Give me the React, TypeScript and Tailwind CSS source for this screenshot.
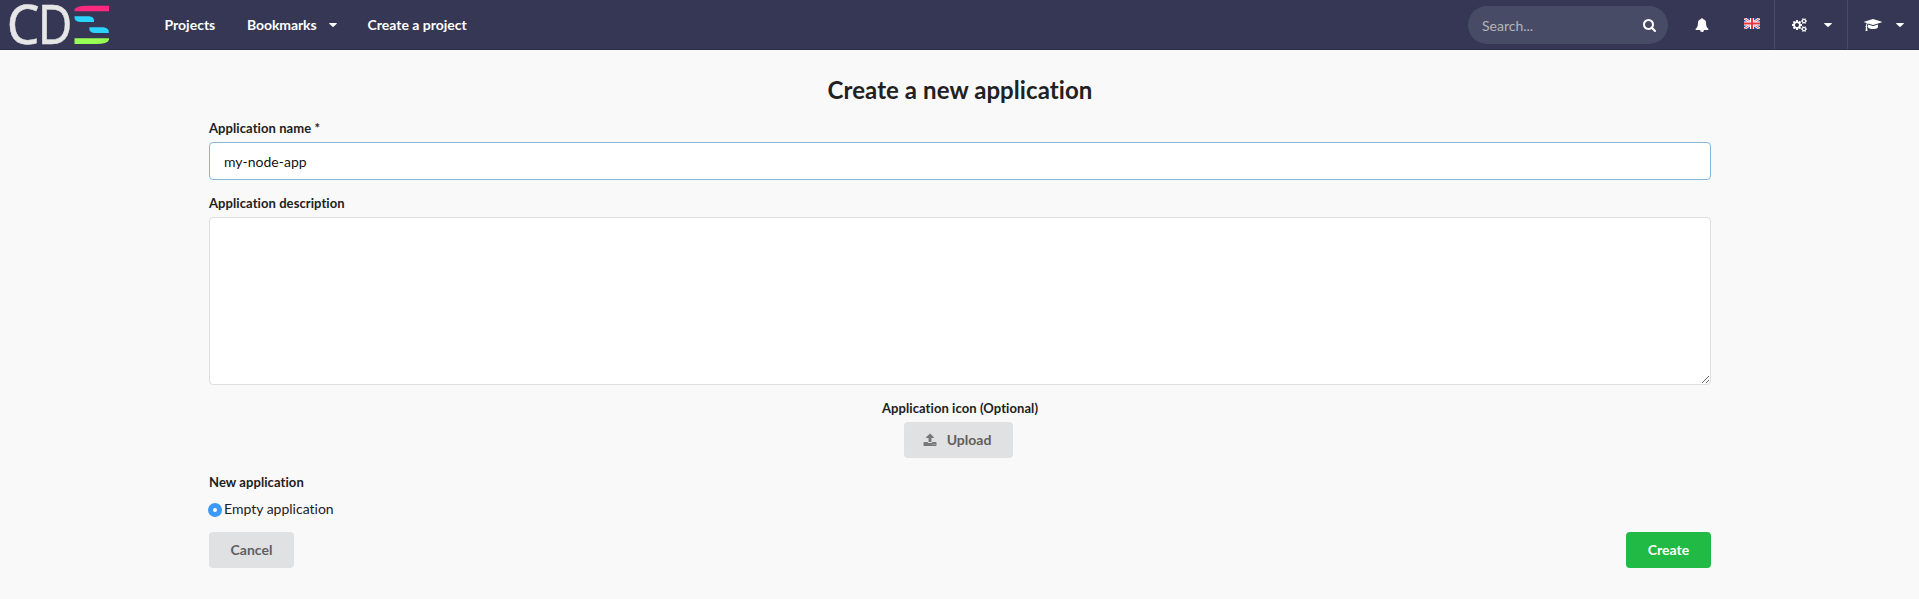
import React, { useState } from "react";

const BELL =
  "M912 1696q0-16-16-16-59 0-101.5-42.5t-42.5-101.5q0-16-16-16t-16 16q0 73 51.5 124.5t124.5 51.5q16 0 16-16zm816-288q0 52-38 90t-90 38h-448q0 106-75 181t-181 75-181-75-75-181h-448q-52 0-90-38t-38-90q50-42 91-88t85-119.5 74.5-158.5 50-206 19.5-260q0-152 117-282.5t307-158.5q-8-19-8-39 0-40 28-68t68-28 68 28 28 68q0 20-8 39 190 28 307 158.5t117 282.5q0 139 19.5 260t50 206 74.5 158.5 85 119.5 91 88z";
const SEARCH =
  "M1152 832q0-185-131.5-316.5t-316.5-131.5-316.5 131.5-131.5 316.5 131.5 316.5 316.5 131.5 316.5-131.5 131.5-316.5zm512 832q0 52-38 90t-90 38q-54 0-90-38l-343-342q-179 124-399 124-143 0-273.5-55.5t-225-150-150-225-55.5-273.5 55.5-273.5 150-225 225-150 273.5-55.5 273.5 55.5 225 150 150 225 55.5 273.5q0 220-124 399l343 343q37 37 37 90z";
const CAP =
  "M1774 836l18 316q4 69-82 128t-235 93.5-323 34.5-323-34.5-235-93.5-82-128l18-316 574 181q22 7 48 7t48-7zm530-324q0 23-22 31l-1120 352q-4 1-10 1t-10-1l-652-206q-43 34-71 111.5t-34 178.5q63 36 63 109 0 69-58 107l58 433q2 14-8 25-9 11-24 11h-192q-15 0-24-11-10-11-8-25l58-433q-58-38-58-107 0-73 65-111 11-207 98-330l-333-104q-22-8-22-31t22-31l1120-352q4-1 10-1t10 1l1120 352q22 8 22 31z";
const UPLOAD =
  "M1344 1472q0-26-19-45t-45-19-45 19-19 45 19 45 45 19 45-19 19-45zm256 0q0-26-19-45t-45-19-45 19-19 45 19 45 45 19 45-19 19-45zm128-224v320q0 40-28 68t-68 28h-1472q-40 0-68-28t-28-68v-320q0-40 28-68t68-28h427q21 56 70.5 92t110.5 36h256q61 0 110.5-36t70.5-92h427q40 0 68 28t28 68zm-325-648q-17 40-59 40h-256v448q0 26-19 45t-45 19h-256q-26 0-45-19t-19-45v-448h-256q-42 0-59-40-17-39 14-69l448-448q18-19 45-19t45 19l448 448q31 30 14 69z";
const COGS =
  "M896 896q0-106-75-181t-181-75-181 75-75 181 75 181 181 75 181-75 75-181zm768 512q0-52-38-90t-90-38-90 38-38 90q0 53 37.5 90.5t90.5 37.5 90.5-37.5 37.5-90.5zm0-1024q0-52-38-90t-90-38-90 38-38 90q0 53 37.5 90.5t90.5 37.5 90.5-37.5 37.5-90.5zm-384 421v185q0 10-7 19.5t-16 10.5l-155 24q-11 35-32 76 34 48 90 115 7 11 7 20 0 12-7 19-23 30-82.5 89.5t-78.5 59.5q-11 0-21-7l-115-90q-37 19-77 31-11 108-23 155-7 24-30 24h-186q-11 0-20-7.5t-10-17.5l-23-153q-34-10-75-31l-118 89q-7 7-20 7-11 0-21-8-144-133-144-160 0-9 7-19 10-14 41-53t47-61q-23-44-35-82l-152-24q-10-1-17-9.5t-7-19.5v-185q0-10 7-19.5t16-10.5l155-24q11-35 32-76-34-48-90-115-7-11-7-20 0-12 7-20 22-30 82-89t79-59q11 0 21 7l115 90q34-18 77-32 11-108 23-154 7-24 30-24h186q11 0 20 7.5t10 17.5l23 153q34 10 75 31l118-89q8-7 20-7 11 0 21 8 144 133 144 160 0 8-7 19-12 16-42 54t-45 60q23 48 34 82l152 23q10 2 17 10.5t7 19.5zm640 533v140q0 16-149 31-12 27-30 52 51 113 51 138 0 4-4 7-122 71-124 71-8 0-46-47t-52-68q-20 2-30 2t-30-2q-14 21-52 68t-46 47q-2 0-124-71-4-3-4-7 0-25 51-138-18-25-30-52-149-15-149-31v-140q0-16 149-31 13-29 30-52-51-113-51-138 0-4 4-7 4-2 35-20t59-34 30-16q8 0 46 46.5t52 67.5q20-2 30-2t30 2q51-71 92-112l6-2q4 0 124 70 4 3 4 7 0 25-51 138 17 23 30 52 149 15 149 31zm0-1024v140q0 16-149 31-12 27-30 52 51 113 51 138 0 4-4 7-122 71-124 71-8 0-46-47t-52-68q-20 2-30 2t-30-2q-14 21-52 68t-46 47q-2 0-124-71-4-3-4-7 0-25 51-138-18-25-30-52-149-15-149-31v-140q0-16 149-31 13-29 30-52-51-113-51-138 0-4 4-7 4-2 35-20t59-34 30-16q8 0 46 46.5t52 67.5q20-2 30-2t30 2q51-71 92-112l6-2q4 0 124 70 4 3 4 7 0 25-51 138 17 23 30 52 149 15 149 31z";

function Icon({ d, w = 1792, className }: { d: string; w?: number; className: string }) {
  return (
    <svg viewBox={`0 0 ${w} 1792`} className={className} fill="currentColor" aria-hidden="true">
      <path d={d} />
    </svg>
  );
}

function Caret({ className = "" }: { className?: string }) {
  return (
    <svg viewBox="0 0 8 4" className={`h-1 w-2 ${className}`} fill="currentColor" aria-hidden="true">
      <path d="M.6 0h6.8q.7.1.3.7L4.5 3.8q-.5.4-1 0L.3.7Q-.1.1.6 0z" />
    </svg>
  );
}

function Logo() {
  return (
    <svg viewBox="0 0 120 50" className="h-[50px] w-[120px] shrink-0 overflow-visible">
      <g
        fill="#e6e6e6"
        stroke="#e6e6e6"
        strokeWidth=".5"
        fontFamily="'Noto Sans', sans-serif"
        fontSize="54"
        fontWeight="400"
      >
        <text transform="translate(6.8 44) scale(.96 1)">C</text>
        <text transform="translate(37.7 44) scale(.88 1)">D</text>
      </g>
      <path d="M74.5 11.3V9.5Q76 5.7 87 5.7h22v5.6z" fill="#ff2a7f" />
      <path d="M74.5 16.2H89q5 .5 5 4.3v1.6H80q-5.500-.6-5.500-4.500z" fill="#2ad4ff" />
      <path d="M89.300 27.200H103q5.800.7 5.800 4.300v1.600H95q-5.700-.5-5.700-4.400z" fill="#2ad4ff" />
      <path d="M74.500 38.200H109v1.500q-1.500 4.300-13 4.300H74.500z" fill="#99ff55" />
    </svg>
  );
}

function Flag() {
  return (
    <svg viewBox="0 0 16 11" className="h-[11px] w-4" aria-hidden="true">
      <path fill="#2f4fa3" d="M0 0h16v11H0z" />
      <path d="M0 0l16 11M16 0L0 11" stroke="#fff" strokeWidth="2.600" />
      <path d="M0 0l16 11M16 0L0 11" stroke="#f0505a" strokeWidth="1" />
      <path d="M8 0v11M0 5.500h16" stroke="#fff" strokeWidth="4" />
      <path d="M8 0v11M0 5.500h16" stroke="#ef3340" strokeWidth="2" />
    </svg>
  );
}

function Header() {
  return (
    <header className="flex h-[50px] items-center border-b border-[#2d2e4b] bg-[#353755] text-sm font-bold text-white">
      <Logo />
      <nav className="ml-[44.500px] flex items-center pt-px">
        <a className="w-[82.500px]">Projects</a>
        <a className="flex w-[120.500px] items-center">
          <span className="w-[82px] tracking-[-0.1px]">Bookmarks</span>
          <Caret />
        </a>
        <a>Create a project</a>
      </nav>
      <div className="ml-auto flex h-[38px] w-[200px] items-center rounded-full bg-[#484b65] pr-[11px] pl-[14px]">
        <input
          placeholder="Search..."
          className="min-w-0 flex-1 bg-transparent pt-0.5 font-normal outline-none placeholder:text-[#b4b4bb]"
        />
        <Icon d={SEARCH} className="size-[14px]" />
      </div>
      <div className="flex w-[68px] justify-center">
        <Icon d={BELL} className="size-[14px]" />
      </div>
      <div className="flex w-[38px] justify-start pb-0.5 pl-2">
        <Flag />
      </div>
      <div className="flex h-full w-[73px] items-center border-l border-[#484a66] pl-[17px]">
        <Icon d={COGS} w={1920} className="h-[14px] w-[15px]" />
        <Caret className="ml-[17px]" />
      </div>
      <div className="flex h-full w-[72px] items-center border-l border-[#484a66] pl-4">
        <Icon d={CAP} w={2304} className="h-[14px] w-[18px]" />
        <Caret className="ml-[14px]" />
      </div>
    </header>
  );
}

const label = "block text-[13px] leading-[18px] font-bold tracking-[0.08px]";
const grayButton =
  "flex h-9 items-center justify-center rounded-[4px] bg-[#e0e1e2] text-sm font-bold text-[#5e5f60]";

export default function App() {
  const [name, setName] = useState("my-node-app");
  return (
    <div className="min-h-screen bg-[#f9f9f9] font-['Lato',sans-serif] text-[#212121] [font-variant-ligatures:none]">
      <Header />
      <main className="ml-[209px] w-[1502px] pt-[23px]">
        <h1 className="text-center text-2xl leading-[34px] font-bold tracking-[0.08px]">
          Create a new application
        </h1>
        <form className="mt-3">
          <label className={label}>Application name *</label>
          <input
            value={name}
            onChange={(e) => setName(e.target.value)}
            className="mt-[5px] block h-[38px] w-full rounded-[4px] border border-[#85b7d9] bg-white px-[14px] pt-px text-sm text-black/95 outline-none"
          />
          <label className={`${label} mt-[14px]`}>Application description</label>
          <textarea className="mt-[5px] block h-[168px] w-full resize-y rounded-[4px] border border-[#dededf] bg-white px-[14px] py-3 text-sm outline-none" />
          <div className="mt-[14px] flex flex-col items-center">
            <span className={label}>Application icon (Optional)</span>
            <button type="button" className={`${grayButton} mt-[5px] mr-[3px] w-[109px] pr-[3px]`}>
              <Icon d={UPLOAD} className="mr-[10px] size-[14px] opacity-80" />
              Upload
            </button>
          </div>
          <div className="mt-[15px]">
            <span className={label}>New application</span>
            <label className="mt-[8px] mb-px -ml-px flex h-5 items-center text-sm">
              <span className="mt-px mr-[2px] flex size-[14px] items-center justify-center rounded-full bg-[#3b99fc]">
                <span className="size-1 rounded-full bg-white" />
              </span>
              Empty application
            </label>
          </div>
          <div className="mt-[13px] flex justify-between">
            <button type="button" className={`${grayButton} w-[85px]`}>
              Cancel
            </button>
            <button
              type="button"
              className="h-9 w-[85px] rounded-[4px] bg-[#21ba45] text-sm font-bold text-white"
            >
              Create
            </button>
          </div>
        </form>
      </main>
    </div>
  );
}
